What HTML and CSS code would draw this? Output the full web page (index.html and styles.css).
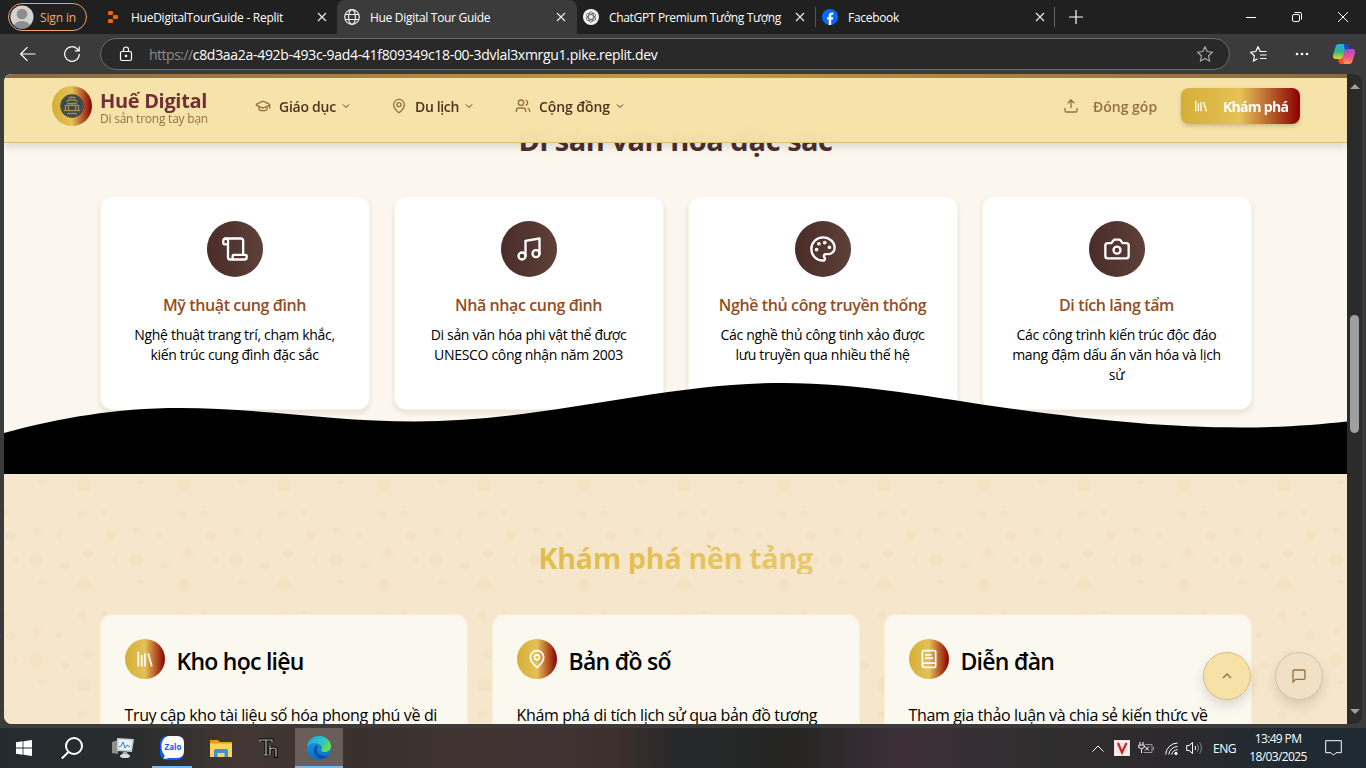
FILE: index.html
```html
<!DOCTYPE html>
<html lang="vi">
<head>
<meta charset="utf-8">
<title>Hue Digital Tour Guide</title>
<link rel="stylesheet" href="styles.css">
</head>
<body>
<svg width="0" height="0" class="defs">
  <symbol id="x" viewBox="0 0 10 10"><path d="M1 1l8 8M9 1L1 9"/></symbol>
  <symbol id="chev" viewBox="0 0 24 24"><path d="m6 9 6 6 6-6"/></symbol>
  <symbol id="library" viewBox="0 0 24 24"><path d="m16 6 4 14M12 6v14M8 8v12M4 4v16"/></symbol>
  <symbol id="pin" viewBox="0 0 24 24"><path d="M20 10c0 4.99-5.54 10.19-7.4 11.8a1 1 0 0 1-1.2 0C9.54 20.19 4 14.99 4 10a8 8 0 0 1 16 0"/><circle cx="12" cy="10" r="3"/></symbol>
</svg>

<div class="tabs">
  <div class="signin"><svg class="avatar" viewBox="0 0 24 24"><clipPath id="av"><circle cx="12" cy="12" r="11.5"/></clipPath><g clip-path="url(#av)"><rect width="24" height="24" fill="#d2d2d0"/><circle cx="12" cy="9" r="5.3" fill="#8f8c89"/><ellipse cx="12" cy="22" rx="8.5" ry="6" fill="#8f8c89"/></g></svg><span>Sign in</span></div>
  <div class="tab t1">
    <svg class="fav" viewBox="0 0 16 16" fill="#f26207"><rect x="3" y="2" width="5" height="4" rx="1"/><rect x="8" y="6" width="5" height="4" rx="1"/><rect x="3" y="10" width="5" height="4" rx="1"/></svg>
    <span class="tt">HueDigitalTourGuide - Replit</span><svg class="close"><use href="#x"/></svg>
  </div>
  <div class="tab t2">
    <svg class="fav line" viewBox="0 0 16 16"><circle cx="8" cy="8" r="7.3"/><ellipse cx="8" cy="8" rx="3.4" ry="7.3"/><path d="M1.3 5.5h13.4M1.3 10.5h13.4"/></svg>
    <span class="tt">Hue Digital Tour Guide</span><svg class="close"><use href="#x"/></svg>
  </div>
  <div class="tab t3">
    <svg class="fav" viewBox="0 0 16 16"><circle cx="8" cy="8" r="8" fill="#f4f4f4"/><g fill="none" stroke="#444" stroke-width=".7"><ellipse cx="8" cy="8" rx="2.4" ry="5.2"/><ellipse cx="8" cy="8" rx="2.4" ry="5.2" transform="rotate(60 8 8)"/><ellipse cx="8" cy="8" rx="2.4" ry="5.2" transform="rotate(120 8 8)"/></g></svg>
    <span class="tt">ChatGPT Premium Tưởng Tượng</span><svg class="close"><use href="#x"/></svg>
  </div>
  <div class="tab t4">
    <svg class="fav" viewBox="0 0 16 16"><circle cx="8" cy="8" r="8" fill="#0866ff"/><path d="M6.7 16v-5.4H5V8.2h1.7V7.1c0-2.4 1.1-3.5 3.4-3.5.5 0 .9 0 1.2.1v2.1h-.8c-1 0-1.3.4-1.3 1.3v1.1h2.1l-.4 2.4H9.2V16z" fill="#fff"/></svg>
    <span class="tt">Facebook</span><svg class="close"><use href="#x"/></svg>
  </div>
  <svg class="plus" viewBox="0 0 14 14"><path d="M7 0v14M0 7h14"/></svg>
  <div class="wins">
    <svg viewBox="0 0 10 10"><path d="M0 5.5h10"/></svg>
    <svg viewBox="0 0 10 10"><rect x=".5" y="2.5" width="7" height="7" rx="1.5"/><path d="M2.5.5H8a1.5 1.5 0 0 1 1.5 1.5v5.5"/></svg>
    <svg viewBox="0 0 10 10"><path d="M0 0l10 10M10 0L0 10"/></svg>
  </div>
</div>

<div class="toolbar">
  <svg class="back" viewBox="0 0 16 16"><path d="M15.5 8H.7M7.5 1.2L.7 8l6.800 6.800"/></svg>
  <svg class="reload" viewBox="0 0 16 16"><path d="M15.3 8A7.300 7.300 0 1 1 13 2.700L15 4.700M15.200.5v4.400h-4.400"/></svg>
  <div class="address">
    <svg class="lock" viewBox="0 0 14 16"><rect x="1.5" y="5.5" width="11" height="9" rx="1.5"/><path d="M4.500 5.500V3.500a2.500 2.500 0 0 1 5 0v2"/><circle cx="7" cy="10" r=".7" fill="#fff"/></svg>
    <span class="url"><i>https://</i>c8d3aa2a-492b-493c-9ad4-41f809349c18-00-3dvlal3xmrgu1.pike.replit.dev</span>
    <svg class="star" viewBox="0 0 16 16"><path d="M8 .8l2.200 4.700 5.200.7-3.800 3.600.9 5.200L8 12.500 3.500 15l.9-5.200L.6 6.200l5.200-.7z"/></svg>
  </div>
  <svg class="favs" viewBox="0 0 17 16"><path d="M10.500 5.500L10.200 5.500 8 .8 5.800 5.500.6 6.200l3.800 3.600L3.500 15l4-2.200M10 5.500h6.500M10 9h6.500M10 12.500h6.500"/></svg>
  <svg class="dots" viewBox="0 0 14 4"><circle cx="2" cy="2" r="1.300"/><circle cx="7" cy="2" r="1.300"/><circle cx="12" cy="2" r="1.300"/></svg>
  <svg class="copilot" viewBox="0 0 22 20"><defs><linearGradient id="ca" x1="0" y1="0" x2="0" y2="1"><stop stop-color="#1fa9f4"/><stop offset=".5" stop-color="#2fb58a"/><stop offset="1" stop-color="#e8d21c"/></linearGradient><linearGradient id="cb" x1="0" y1="0" x2="0" y2="1"><stop stop-color="#a04de8"/><stop offset=".5" stop-color="#ee4c96"/><stop offset="1" stop-color="#fd9a4a"/></linearGradient></defs><path d="M6 0h8l-3.500 12c-.6 2-1.500 3-3.500 3H3c-2 0-3.500-1-3-4L2.500 3C3 1 4 0 6 0z" fill="url(#ca)"/><path d="M11 0h3c2 0 2.300 2 3 5h-5.500z" fill="#1b46c8"/><path d="M16 20H8l3.500-12c.6-2 1.500-3 3.500-3h4c2 0 3.500 1 3 4l-2.500 8c-.5 2-1.500 3-3.500 3z" fill="url(#cb)"/><path d="M5 15h5l1 5H8c-2 0-2.300-2-3-5z" fill="#f4502c"/></svg>
</div>

<div class="window">
  <div class="page">
    <header class="header">
      <div class="brand">
        <svg class="logo" viewBox="0 0 40 40"><defs><linearGradient id="g"><stop stop-color="#d4af37"/><stop offset=".5" stop-color="#e5c158"/><stop offset="1" stop-color="#8b0000"/></linearGradient></defs><circle cx="20" cy="20" r="20" fill="url(#g)"/><circle cx="20" cy="20" r="11.700" fill="#37424a"/><circle cx="20" cy="20" r="10" fill="none" stroke="#8d8454" stroke-width=".8" stroke-dasharray="1.200 1"/><g fill="none" stroke="#a08e4e" stroke-width="1.300"><path d="M14 15.500q6-3.500 12 0M16.500 12.500q3.500-2.500 7 0M12.500 19.500h15M13.500 20v4.500M16.500 20v4.500M20 17v3M23.500 20v4.500M26.500 20v4.500M12 24.500h16M15 17.500h10M15 27.500h10"/></g></svg>
        <div class="words"><div class="name">Huế Digital</div><div class="tag">Di sản trong tay bạn</div></div>
      </div>
      <nav class="nav">
        <a class="n1"><svg viewBox="0 0 24 24"><path d="M21.420 10.922a1 1 0 0 0-.019-1.838L12.830 5.180a2 2 0 0 0-1.660 0L2.600 9.080a1 1 0 0 0 0 1.832l8.570 3.908a2 2 0 0 0 1.660 0zM22 10v6M6 12.500V16a6 3 0 0 0 12 0v-3.500"/></svg><span>Giáo dục</span><svg class="c"><use href="#chev"/></svg></a>
        <a class="n2"><svg><use href="#pin"/></svg><span>Du lịch</span><svg class="c"><use href="#chev"/></svg></a>
        <a class="n3"><svg viewBox="0 0 24 24"><path d="M16 21v-2a4 4 0 0 0-4-4H6a4 4 0 0 0-4 4v2M22 21v-2a4 4 0 0 0-3-3.870M16 3.130a4 4 0 0 1 0 7.750"/><circle cx="9" cy="7" r="4"/></svg><span>Cộng đồng</span><svg class="c"><use href="#chev"/></svg></a>
      </nav>
      <div class="actions">
        <a class="give"><svg viewBox="0 0 24 24"><path d="M21 15v4a2 2 0 0 1-2 2H5a2 2 0 0 1-2-2v-4M17 8l-5-5-5 5M12 3v12"/></svg><span>Đóng góp</span></a>
        <a class="cta"><svg><use href="#library"/></svg><span>Khám phá</span></a>
      </div>
    </header>

    <section class="heritage">
      <h2 class="h-dark">Di sản văn hóa đặc sắc</h2>
      <div class="grid4">
        <article class="card"><div class="disc"><svg viewBox="0 0 24 24"><path d="M19 17V5a2 2 0 0 0-2-2H4"/><path d="M8 21h12a2 2 0 0 0 2-2v-1a1 1 0 0 0-1-1H11a1 1 0 0 0-1 1v1a2 2 0 1 1-4 0V5a2 2 0 1 0-4 0v2a1 1 0 0 0 1 1h3"/></svg></div><h3>Mỹ thuật cung đình</h3><p>Nghệ thuật trang trí, chạm khắc,<br>kiến trúc cung đình đặc sắc</p></article>
        <article class="card"><div class="disc"><svg viewBox="0 0 24 24"><path d="M9 18V5l12-2v13"/><circle cx="6" cy="18" r="3"/><circle cx="18" cy="16" r="3"/></svg></div><h3>Nhã nhạc cung đình</h3><p>Di sản văn hóa phi vật thể được<br>UNESCO công nhận năm 2003</p></article>
        <article class="card"><div class="disc"><svg viewBox="0 0 24 24"><path d="M12 2C6.500 2 2 6.500 2 12s4.500 10 10 10c.926 0 1.648-.746 1.648-1.688 0-.437-.18-.835-.437-1.125-.29-.289-.438-.652-.438-1.125a1.640 1.640 0 0 1 1.668-1.668h1.996c3.051 0 5.555-2.503 5.555-5.554C21.965 6.012 17.461 2 12 2z"/><g fill="#fff"><circle cx="13.500" cy="6.500" r=".6"/><circle cx="17.500" cy="10.500" r=".6"/><circle cx="8.500" cy="7.500" r=".6"/><circle cx="6.500" cy="12.500" r=".6"/></g></svg></div><h3>Nghề thủ công truyền thống</h3><p>Các nghề thủ công tinh xảo được<br>lưu truyền qua nhiều thế hệ</p></article>
        <article class="card"><div class="disc"><svg viewBox="0 0 24 24"><path d="M14.500 4h-5L7 7H4a2 2 0 0 0-2 2v9a2 2 0 0 0 2 2h16a2 2 0 0 0 2-2V9a2 2 0 0 0-2-2h-3l-2.500-3z"/><circle cx="12" cy="13" r="3"/></svg></div><h3>Di tích lăng tẩm</h3><p>Các công trình kiến trúc độc đáo<br>mang đậm dấu ấn văn hóa và lịch<br>sử</p></article>
      </div>
      <svg class="wave" viewBox="4 374 1343 100" preserveAspectRatio="none"><path d="M4 433C60 418 115 408 180 408C260 408 335 421.500 415 421.500C545 421.500 660 383 783 383C860 383 935 398 1010 408.500C1100 421 1170 427.500 1240 427.500C1280 427.500 1315 425 1347 421.500V475H4z"/></svg>
    </section>

    <section class="platform">
      <svg class="bubbles"><defs><pattern id="b" width="100" height="100" patternUnits="userSpaceOnUse"><g fill="#d4af37"><circle cx="80" cy="11" r="7"/><circle cx="32" cy="86" r="7"/><circle cx="7" cy="61.500" r="5"/><circle cx="84" cy="79.500" r="5"/><circle cx="78" cy="41" r="4"/><circle cx="33" cy="57" r="4"/><circle cx="61" cy="91.500" r="4"/><circle cx="37" cy="8" r="3"/><circle cx="0" cy="39" r="3"/><circle cx="100" cy="39" r="3"/><circle cx="55" cy="61.500" r="3"/><circle cx="11" cy="86" r="3"/></g></pattern></defs><rect width="100%" height="100%" fill="url(#b)" opacity=".06"/></svg>
      <h2 class="h-gold">Khám phá nền tảng</h2>
      <div class="grid3">
        <article class="panel"><div class="ph"><div class="gold"><svg><use href="#library"/></svg></div><h3>Kho học liệu</h3></div><p>Truy cập kho tài liệu số hóa phong phú về di</p></article>
        <article class="panel"><div class="ph"><div class="gold"><svg><use href="#pin"/></svg></div><h3>Bản đồ số</h3></div><p>Khám phá di tích lịch sử qua bản đồ tương</p></article>
        <article class="panel"><div class="ph"><div class="gold"><svg viewBox="0 0 24 24"><path d="M4 19.500v-15A2.500 2.500 0 0 1 6.500 2H19a1 1 0 0 1 1 1v18a1 1 0 0 1-1 1H6.500a1 1 0 0 1 0-5H20M8 11h8M8 7h6"/></svg></div><h3>Diễn đàn</h3></div><p>Tham gia thảo luận và chia sẻ kiến thức về</p></article>
      </div>
    </section>
    <div class="fab up"><svg viewBox="0 0 24 24"><path d="m18 15-6-6-6 6"/></svg></div>
    <div class="fab chat"><svg viewBox="0 0 24 24"><path d="M21 15a2 2 0 0 1-2 2H7l-4 4V5a2 2 0 0 1 2-2h14a2 2 0 0 1 2 2z"/></svg></div>
  </div>
  <div class="scroll"><i class="su"></i><i class="thumb"></i><i class="sd"></i></div>
</div>

<div class="taskbar">
  <div class="tb start"><svg width="16" height="16" viewBox="0 0 16 16" fill="#fff"><path d="M0 2.200L6.600 1.300V7.600H0zM7.400 1.200L16 0V7.600H7.400zM0 8.400H6.600V14.700L0 13.800zM7.400 8.400H16V16L7.400 14.800z"/></svg></div>
  <div class="tb find"><svg width="22" height="22" viewBox="0 0 22 22" fill="none" stroke="#fff" stroke-width="2"><circle cx="13" cy="9" r="8"/><path d="M7.500 15L.8 21.500"/></svg></div>
  <div class="tb"><svg width="24" height="22" viewBox="0 0 24 22"><path d="M1 5l6-2v14l-6-1z" fill="#8c8f8e"/><path d="M6 1l17 1-2 13-15-1z" fill="#c9cccc"/><path d="M7.500 2.500l13.500 1-1.500 10-12-1z" fill="#e9f4fa"/><path d="M8 10l2-1 2-4 2 6 2-3 3 2" fill="none" stroke="#2a7fb5"/><path d="M12 15h4l1 3h-6z" fill="#aaa"/><ellipse cx="14" cy="19" rx="5" ry="2" fill="#ddd"/></svg></div>
  <div class="tb zalo"><svg width="24" height="24" viewBox="0 0 24 24"><rect width="24" height="24" rx="7" fill="#0a5cff"/><path d="M8 0h9q7 0 7 7v8q0 7-7 7H9q-3 1-6 .5 2-1 1.500-3Q2 17 1.500 12 1 2 8 0z" fill="#fff"/><text x="13" y="14" font-size="8" text-anchor="middle">Zalo</text></svg></div>
  <div class="tb"><svg width="22" height="19" viewBox="0 0 22 19"><path d="M0 1h8l2 2h12v15H0z" fill="#e0a010"/><path d="M0 4.500h22V18H0z" fill="#ffd45e"/><path d="M4 18v-6.500q0-1.500 1.500-1.500h11q1.500 0 1.500 1.500V18h-3.500v-4h-7v4z" fill="#3d92d6"/></svg></div>
  <div class="tb"><svg width="22" height="20" viewBox="0 0 22 20"><path d="M1 4V2h12v2M7 2v15M5 17h4M11 8v9M11 11q4-2 6 0v8M15 18.500h4" fill="none" stroke="#000" stroke-width="3"/><path d="M1 4V2h12v2M7 2v15M5 17h4M11 8v9M11 11q4-2 6 0v8" fill="none" stroke="#bbb" stroke-width="1.200"/></svg></div>
  <div class="tb edge"><svg width="24" height="24" viewBox="0 0 24 24"><defs><linearGradient id="e1" y2=".6"><stop stop-color="#1d9fe0"/><stop offset=".6" stop-color="#2fc4c8"/><stop offset="1" stop-color="#66e04d"/></linearGradient><linearGradient id="e2" x2="0" y2="1"><stop stop-color="#1b9ce8"/><stop offset="1" stop-color="#0a6cc8"/></linearGradient></defs><circle cx="12" cy="12" r="12" fill="url(#e2)"/><path d="M.2 10.500C1 4.500 6 0 12 0c7 0 12 5 12 10 0 4-3 6-6.500 6-2.500 0-4-1-3-2.300 1-1.200.8-2.200.3-3.200C13 6.500 5 5 .2 10.500z" fill="url(#e1)"/><path d="M9 9.500c-3 2.500-3 9 2.500 12.500 3 1.800 7.500.5 10-3-5.500 2.500-12-.5-12-5.500 0-1.500.7-2.800 1.500-3.700-.6-.5-1.300-.6-2-.3z" fill="#0d4f9e"/></svg></div>
  <div class="tray">
    <svg width="12" height="7" viewBox="0 0 12 7"><path d="M.5 6.500L6 1l5.500 5.500"/></svg>
    <svg class="tv" width="16" height="16" viewBox="0 0 16 16"><rect width="16" height="16" fill="#e4b4b4"/><rect x="1.500" y="1.500" width="13" height="13" fill="#f6e4e4"/><path d="M4 3l4 9.500L12.500 3" fill="none" stroke="#c9242a" stroke-width="2.200"/></svg>
    <svg class="tp" width="17" height="14" viewBox="0 0 17 14"><path d="M2 1v2.500M5 1v2.500M.8 4h5.400v2.500Q3.500 9 .8 6.500zM3.500 8v4"/><path d="M7.500 3.500H14v8H5.500M15.500 6v3" stroke="#999"/><path d="M7 5.500l4 4M11 5.500l-4 4"/></svg>
    <svg class="tw" width="13" height="13" viewBox="0 0 13 13"><path d="M.7 12.500A12 12 0 0 1 12.500 1M3.800 12.500A9 9 0 0 1 12.500 4.500M6.800 12.500A6 6 0 0 1 12.500 7.800"/><circle cx="11" cy="11.500" r="1.200" fill="#fff"/></svg>
    <svg class="ts" width="17" height="14" viewBox="0 0 17 14"><path d="M.7 4.500h2.500L6.500 1.500v11L3.200 9.500H.7zM9 5q1.300 2 0 4"/><path d="M11.300 3.300q2.500 3.700 0 7.400M13.700 1.500q3.500 5.500 0 11" stroke="#888"/></svg>
    <span class="eng">ENG</span>
    <div class="clock">13:49 PM<br>18/03/2025</div>
    <svg class="tn" width="17" height="17" viewBox="0 0 17 17"><path d="M.7.7h15.600v12H11l-2.500 2.500L6 12.700H.7z"/></svg>
  </div>
</div>
</body>
</html>
```
FILE: styles.css
```css
* { box-sizing: border-box; margin: 0; padding: 0; }
body { width: 1366px; height: 768px; overflow: hidden; background: #3b3b3b; font-family: "Open Sans", "Noto Sans", sans-serif; color: #000; display: flex; flex-direction: column; }
svg { flex: none; }
.defs { position: absolute; }

/* Browser tab strip */
.tabs { height: 34px; flex: none; background: #202020; display: flex; align-items: center; color: #fff; font-size: 12px; letter-spacing: -.3px; }
.signin { width: 79px; height: 28px; margin-left: 8px; border: 1px solid #f0a068; border-radius: 14px; display: flex; align-items: center; gap: 6px; padding-left: 1px; color: #f5a572; letter-spacing: -.14px; }
.avatar { width: 24px; height: 24px; }
.tab { height: 34px; display: flex; align-items: center; }
.fav { width: 16px; height: 16px; margin-right: 10px; }
.line { fill: none; stroke: #eee; stroke-width: 1.2; }
.tt { flex: 1; white-space: nowrap; }
.close { width: 10px; height: 10px; stroke: #e8e8e8; stroke-width: 1.2; }
.t1 { width: 250px; padding: 0 10px 0 18px; letter-spacing: -.26px; }
.t2 { width: 240px; padding: 0 11px 0 7px; background: #3b3b3b; border-radius: 8px 8px 0 0; }
.t3 { width: 239px; padding: 0 11px 0 6px; letter-spacing: -.33px; }
.t3::after { content: ""; width: 1px; height: 20px; background: #555; margin: 0 -11px 0 10px; }
.t4 { width: 239px; padding: 0 11px 0 6px; }
.t4::after { content: ""; width: 1px; height: 20px; background: #666; margin: 0 -11px 0 9px; }
.plus { width: 14px; height: 14px; margin-left: 14px; stroke: #fff; stroke-width: 1.2; }
.wins { margin-left: auto; display: flex; gap: 36px; padding-right: 18px; }
.wins svg { width: 10px; height: 10px; fill: none; stroke: #fff; overflow: visible; }

/* Toolbar */
.toolbar { height: 40px; flex: none; display: flex; align-items: center; padding-left: 20px; fill: none; stroke: #fff; stroke-width: 1.2; }
.back { width: 16px; height: 16px; }
.reload { width: 16px; height: 16px; margin-left: 28px; }
.address { width: 1130px; height: 32px; margin-left: 20px; border: 1px solid #6a6a6a; border-radius: 16px; background: #292929; display: flex; align-items: center; padding: 0 16px 0 18px; }
.lock { width: 14px; height: 16px; }
.url { flex: 1; margin-left: 16px; font-size: 14px; letter-spacing: -.3px; color: #fff; white-space: nowrap; }
.url i { font-style: normal; color: #8c8c8c; letter-spacing: -.5px; }
.star { width: 16px; height: 16px; stroke: #a8a8a8; }
.favs { width: 17px; height: 16px; margin-left: 20px; }
.dots { width: 14px; height: 4px; margin-left: 28px; fill: #fff; stroke: none; }
.copilot { width: 22px; height: 20px; margin-left: 24px; stroke: none; }

/* Viewport */
.window { height: 650px; flex: none; margin: 0 4px; display: flex; border-radius: 8px; overflow: hidden; background: #2b2b2b; }
.page { width: 1343px; position: relative; display: flex; flex-direction: column; background: #fbf6ee; }
.scroll { width: 15px; display: flex; flex-direction: column; align-items: center; padding: 10px 0; }
.su { border: 5px solid transparent; border-top: 0; border-bottom: 5px solid #a0a0a0; }
.sd { border: 5px solid transparent; border-bottom: 0; border-top: 5px solid #a0a0a0; margin-top: auto; }
.thumb { width: 9px; height: 118px; border-radius: 5px; background: #9f9f9f; margin-top: 226px; }

/* Site header */
.header { height: 69px; flex: none; position: relative; z-index: 5; background: rgba(246, 226, 166, .96); backdrop-filter: blur(8px); border-bottom: 1px solid #d9bd7c; box-shadow: 0 4px 8px rgba(0, 0, 0, .12); display: flex; align-items: center; padding: 0 47px 4px 48px; }
.header::before { content: ""; position: absolute; left: 0; right: 0; top: 0; height: 4px; background: linear-gradient(90deg, #8b6840, #c59a3e 50%, #8b6840); }
.brand { display: flex; align-items: center; gap: 8px; width: 203px; }
.logo { width: 40px; height: 40px; }
.words { padding-top: 6px; }
.name { font-size: 20px; line-height: 20px; font-weight: 700; letter-spacing: -.33px; color: #722f37; white-space: nowrap; }
.tag { font-size: 12px; line-height: 16px; letter-spacing: -.23px; color: #96713f; white-space: nowrap; }
.nav { display: flex; font-size: 14px; font-weight: 600; color: #4a3520; letter-spacing: -.25px; }
.nav a { display: flex; align-items: center; fill: none; stroke: #96713f; stroke-width: 2; }
.nav span { padding-left: 8px; white-space: nowrap; }
.nav svg { width: 16px; height: 16px; }
.nav .c { width: 12px; height: 12px; margin-left: 4px; stroke: #4a3520; }
.n1 { width: 136px; }
.n2 { width: 124px; letter-spacing: -.35px; }
.n3 { letter-spacing: -.1px; }
.actions { margin-left: auto; display: flex; align-items: center; font-size: 14px; font-weight: 600; }
.actions a { display: flex; align-items: center; fill: none; stroke-width: 2; white-space: nowrap; }
.actions svg { width: 16px; height: 16px; }
.actions .give { color: #96713f; stroke: #96713f; width: 118px; gap: 14px; }
.actions .cta { width: 119px; height: 36px; padding-left: 12px; gap: 14px; border-radius: 8px; color: #fff; stroke: #fff; font-weight: 700; letter-spacing: -.7px; background: linear-gradient(90deg, #d4af37, #e5c158 50%, #8b0000); box-shadow: 0 2px 4px rgba(0, 0, 0, .18); }

/* Heritage section */
.heritage { height: 354px; flex: none; position: relative; margin-top: -23px; }
h2 { width: 1152px; margin: 0 auto 40px; height: 36px; line-height: 39px; font-size: 29px; font-weight: 700; letter-spacing: -.48px; text-align: center; }
.h-dark { color: #4e2f2b; }
.grid4, .grid3 { width: 1152px; margin: 0 auto; display: grid; gap: 24px; position: relative; }
.grid4 { grid-template-columns: repeat(4, minmax(0, 1fr)); }
.grid3 { grid-template-columns: repeat(3, minmax(0, 1fr)); }
.card { height: 214px; background: #fff; border: 1px solid #faf5e2; border-radius: 12px; box-shadow: 0 3px 5px rgba(60, 50, 10, .1); padding-top: 24px; text-align: center; }
.disc { width: 56px; height: 56px; margin: 0 auto 16px; border-radius: 50%; background: linear-gradient(90deg, #4a2c2a, #5d4037); display: grid; place-items: center; }
.disc svg { width: 28px; height: 28px; fill: none; stroke: #fff; stroke-width: 2; stroke-linecap: round; stroke-linejoin: round; }
.card h3 { font-size: 16px; line-height: 25px; font-weight: 600; letter-spacing: -.39px; color: #954d1e; margin-bottom: 7px; white-space: nowrap; }
.card p { font-size: 14px; line-height: 20px; letter-spacing: -.31px; white-space: nowrap; }
.wave { position: absolute; left: 0; bottom: 0; width: 1343px; height: 100px; }

/* Platform section */
.platform { flex: 1; position: relative; background: #f6e6cb; padding-top: 64px; overflow: hidden; }
.bubbles { position: absolute; inset: 0; width: 100%; height: 100%; }
.h-gold { position: relative; color: transparent; background: linear-gradient(90deg, #d4af37, #e5c158 50%, #f3e0a8); background-clip: text; -webkit-background-clip: text; }
.panel { height: 240px; background: #fbf8ef; border: 1px solid #f8f0d6; border-radius: 12px; padding: 24px; }
.ph { display: flex; align-items: center; gap: 12px; height: 40px; }
.gold { width: 40px; height: 40px; border-radius: 50%; background: linear-gradient(90deg, #d4af37, #e5c158 50%, #8b0000); display: grid; place-items: center; }
.gold svg { width: 20px; height: 20px; fill: none; stroke: #fff; stroke-width: 2; stroke-linecap: round; stroke-linejoin: round; }
.panel h3 { font-size: 23px; line-height: 24px; font-weight: 600; letter-spacing: -.74px; white-space: nowrap; padding-top: 3px; }
.panel p { margin-top: 24px; font-size: 16px; line-height: 24px; letter-spacing: -.35px; white-space: nowrap; }
.fab { position: absolute; width: 48px; height: 48px; border-radius: 50%; top: 578px; border: 1px solid #d9be83; display: grid; place-items: center; box-shadow: 0 6px 12px rgba(0, 0, 0, .12); }
.fab svg { width: 16px; height: 16px; fill: none; stroke: #96713f; stroke-width: 2; }
.up { left: 1199px; background: #f6e2a7; }
.chat { left: 1271px; background: #f0e0c5; border-color: #d6c3a2; }

/* Taskbar */
.taskbar { margin-top: 4px; height: 40px; flex: none; display: flex; background: linear-gradient(90deg, #242b2f 0, #292c2d 130px, #433733 240px, #38302d 360px, #40342f 470px, #413334 530px, #3e302c 610px, #26282a 680px, #252523 790px, #3d2f38 900px, #2f2e2e 1050px, #2e2a2d 1150px, #1f2a33 1300px); color: #fff; }
.tb { width: 48px; height: 40px; display: grid; place-items: center; margin-right: 1.2px; }
.start { margin-right: 0; }
.find { margin-right: 2.6px; }
.zalo { background: linear-gradient(#76b9ed, #76b9ed) 4px 38px / 40px 2px no-repeat; }
.zalo text { font-family: "Open Sans", sans-serif; font-weight: 700; fill: #0a5cff; }
.edge { background: #6a5e5a; box-shadow: inset 0 -2px #76b9ed; }
.tray { margin-left: auto; display: flex; align-items: center; fill: none; stroke: #fff; font-size: 12px; padding-right: 24px; }
.tv { margin-left: 10px; }
.tp { margin-left: 8px; }
.tw { margin-left: 10px; }
.ts { margin-left: 8px; }
.eng { margin-left: 10px; letter-spacing: -.45px; stroke: none; }
.clock { margin-left: 13px; width: 58px; line-height: 18px; letter-spacing: -.64px; text-align: center; white-space: nowrap; }
.tn { margin-left: 18px; }
```
